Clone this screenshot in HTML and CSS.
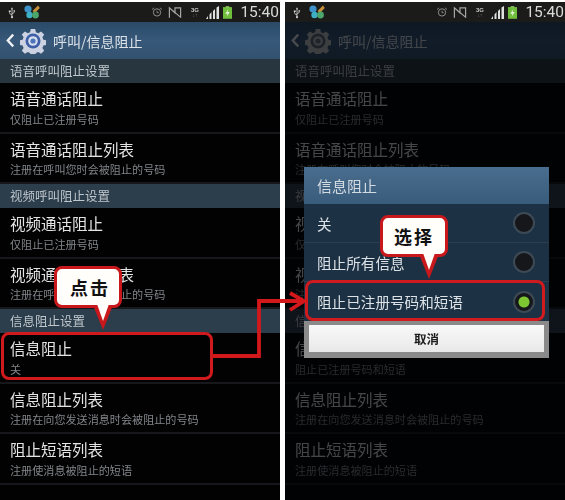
FILE: index.html
```html
<!DOCTYPE html>
<html lang="zh">
<head>
<meta charset="utf-8">
<title>呼叫/信息阻止</title>
<link rel="stylesheet" href="styles.css">
</head>
<body>
<main class="page">
  <section class="phone">
    <header class="status">
      <svg class="usb" viewBox="0 0 10 14"><path d="M5 .5 3.600 3H4.500V9.500L2.500 7.800V6.400H3.400V4.600H1V6.400H1.700V8.200L4.500 10.600V11.500A1.300 1.300 0 1 0 5.500 11.500V9L8 7.200V5.800H8.800V4.200H6.800V5.800H7.300V6.800L5.500 8V3H6.400Z" fill="#d8dad8"/></svg>
      <svg class="notif" viewBox="0 0 16 14"><circle cx="4" cy="4" r="3.600" fill="#3f93c9"/><circle cx="5.500" cy="10" r="3.200" fill="#3fb0c4"/><path d="M8.500 6 14 .5 15.800 3 11 8Z" fill="#c9903a"/><circle cx="11.500" cy="10" r="3.400" fill="#4aa66b"/></svg>
      <span class="spacer"></span>
      <svg class="alarm" viewBox="0 0 14 12"><circle cx="7" cy="6.500" r="4.400" fill="none" stroke="#8d8f8d" stroke-width="1.200"/><path d="M1 3 3.500 1M13 3 10.500 1M7 4.500V6.800H9" fill="none" stroke="#8d8f8d" stroke-width="1.100"/></svg>
      <svg class="mute" viewBox="0 0 15 13"><path d="M1.500 12V1.500L7.500 7V1.500H13.500V12M1 1 14 12" fill="none" stroke="#a4a6a4" stroke-width="1.300"/></svg>
      <span class="net"><b>3G</b><i>↓↑</i></span>
      <svg class="signal" viewBox="0 0 15 13"><path d="M0 13 2 10V13ZM3.500 13V8.500L5.500 6V13ZM7 13V5L9 3V13ZM10.500 13V1.500L13 0V13Z" fill="#dfe1df"/></svg>
      <svg class="battery" viewBox="0 0 10 14"><rect y="1" width="10" height="13" fill="#6fbe3c"/><rect x="3" width="4" height="1.500" fill="#9bd06c"/><path d="M6 3 2.500 8.500H5L4 12 7.500 6.500H5Z" fill="#e6f2d8"/></svg>
      <span class="clock">15:40</span>
    </header>
    <div class="screen">
      <div class="actionbar">
        <svg class="back" viewBox="0 0 10 16"><path d="M8 1.500 2 8l6 6.500" fill="none" stroke="#eef1f3" stroke-width="2.600"/></svg>
        <svg class="gear" viewBox="0 0 26 26">
          <path class="gear-body" d="M10.800 1h4.400l.7 3.200 2.400 1 2.800-1.800 3.100 3.100-1.800 2.800 1 2.400 3.200.7v4.400l-3.200.7-1 2.400 1.800 2.800-3.100 3.100-2.800-1.800-2.400 1-.7 3.200h-4.400l-.7-3.200-2.400-1-2.800 1.800-3.100-3.100 1.800-2.800-1-2.400-3.200-.7v-4.400l3.200-.7 1-2.400-1.800-2.800 3.100-3.100 2.800 1.800 2.400-1Z"/>
          <circle cx="13" cy="13" r="7.500" class="gear-ring"/><circle cx="13" cy="13" r="4.800" class="gear-light"/><circle cx="13" cy="13" r="2.600" class="gear-hole"/>
        </svg>
        <h1 class="bar-title">呼叫/信息阻止</h1>
      </div>
      <h2 class="group first">语音呼叫阻止设置</h2>
      <div class="row"><div class="title">语音通话阻止</div><div class="sub">仅阻止已注册号码</div></div>
      <div class="row"><div class="title">语音通话阻止列表</div><div class="sub">注册在呼叫您时会被阻止的号码</div></div>
      <h2 class="group">视频呼叫阻止设置</h2>
      <div class="row"><div class="title">视频通话阻止</div><div class="sub">仅阻止已注册号码</div></div>
      <div class="row"><div class="title">视频通话阻止列表</div><div class="sub">注册在呼叫您时会被阻止的号码</div></div>
      <h2 class="group">信息阻止设置</h2>
      <div class="row"><div class="title">信息阻止</div><div class="sub">关</div></div>
      <div class="row"><div class="title">信息阻止列表</div><div class="sub">注册在向您发送消息时会被阻止的号码</div></div>
      <div class="row"><div class="title">阻止短语列表</div><div class="sub">注册使消息被阻止的短语</div></div>
    </div>
    <div class="highlight"></div>
    <div class="bubble bubble-left"><span>点击</span></div>
  </section>

  <section class="phone">
    <header class="status">
      <svg class="usb" viewBox="0 0 10 14"><path d="M5 .5 3.600 3H4.500V9.500L2.500 7.800V6.400H3.400V4.600H1V6.400H1.700V8.200L4.500 10.600V11.500A1.300 1.300 0 1 0 5.500 11.500V9L8 7.200V5.800H8.800V4.200H6.800V5.800H7.300V6.800L5.500 8V3H6.400Z" fill="#d8dad8"/></svg>
      <svg class="notif" viewBox="0 0 16 14"><circle cx="4" cy="4" r="3.600" fill="#3f93c9"/><circle cx="5.500" cy="10" r="3.200" fill="#3fb0c4"/><path d="M8.500 6 14 .5 15.800 3 11 8Z" fill="#c9903a"/><circle cx="11.500" cy="10" r="3.400" fill="#4aa66b"/></svg>
      <span class="spacer"></span>
      <svg class="alarm" viewBox="0 0 14 12"><circle cx="7" cy="6.500" r="4.400" fill="none" stroke="#8d8f8d" stroke-width="1.200"/><path d="M1 3 3.500 1M13 3 10.500 1M7 4.500V6.800H9" fill="none" stroke="#8d8f8d" stroke-width="1.100"/></svg>
      <svg class="mute" viewBox="0 0 15 13"><path d="M1.500 12V1.500L7.500 7V1.500H13.500V12M1 1 14 12" fill="none" stroke="#a4a6a4" stroke-width="1.300"/></svg>
      <span class="net"><b>3G</b><i>↓↑</i></span>
      <svg class="signal" viewBox="0 0 15 13"><path d="M0 13 2 10V13ZM3.500 13V8.500L5.500 6V13ZM7 13V5L9 3V13ZM10.500 13V1.500L13 0V13Z" fill="#dfe1df"/></svg>
      <svg class="battery" viewBox="0 0 10 14"><rect y="1" width="10" height="13" fill="#6fbe3c"/><rect x="3" width="4" height="1.500" fill="#9bd06c"/><path d="M6 3 2.500 8.500H5L4 12 7.500 6.500H5Z" fill="#e6f2d8"/></svg>
      <span class="clock">15:40</span>
    </header>
    <div class="screen">
      <div class="actionbar">
        <svg class="back" viewBox="0 0 10 16"><path d="M8 1.500 2 8l6 6.500" fill="none" stroke="#eef1f3" stroke-width="2.600"/></svg>
        <svg class="gear gear-off" viewBox="0 0 26 26">
          <path class="gear-body" d="M10.800 1h4.400l.7 3.200 2.400 1 2.800-1.800 3.100 3.100-1.800 2.800 1 2.400 3.200.7v4.400l-3.200.7-1 2.400 1.800 2.800-3.100 3.100-2.800-1.800-2.400 1-.7 3.200h-4.400l-.7-3.200-2.400-1-2.800 1.800-3.100-3.100 1.800-2.800-1-2.400-3.200-.7v-4.400l3.200-.7 1-2.400-1.800-2.800 3.100-3.100 2.800 1.800 2.400-1Z"/>
          <circle cx="13" cy="13" r="7.500" class="gear-ring"/><circle cx="13" cy="13" r="4.800" class="gear-light"/><circle cx="13" cy="13" r="2.600" class="gear-hole"/>
        </svg>
        <h1 class="bar-title">呼叫/信息阻止</h1>
      </div>
      <h2 class="group first">语音呼叫阻止设置</h2>
      <div class="row"><div class="title">语音通话阻止</div><div class="sub">仅阻止已注册号码</div></div>
      <div class="row"><div class="title">语音通话阻止列表</div><div class="sub">注册在呼叫您时会被阻止的号码</div></div>
      <h2 class="group">视频呼叫阻止设置</h2>
      <div class="row"><div class="title">视频通话阻止</div><div class="sub">仅阻止已注册号码</div></div>
      <div class="row"><div class="title">视频通话阻止列表</div><div class="sub">注册在呼叫您时会被阻止的号码</div></div>
      <h2 class="group">信息阻止设置</h2>
      <div class="row"><div class="title">信息阻止</div><div class="sub">阻止已注册号码和短语</div></div>
      <div class="row"><div class="title">信息阻止列表</div><div class="sub">注册在向您发送消息时会被阻止的号码</div></div>
      <div class="row"><div class="title">阻止短语列表</div><div class="sub">注册使消息被阻止的短语</div></div>
      <div class="scrim"></div>
    </div>
    <div class="dialog">
      <div class="dialog-head">信息阻止</div>
      <div class="option"><span>关</span><i class="radio"></i></div>
      <div class="option"><span>阻止所有信息</span><i class="radio"></i></div>
      <div class="option selected"><span>阻止已注册号码和短语</span><i class="radio on"></i></div>
      <div class="dialog-foot"><button class="cancel" type="button">取消</button></div>
    </div>
    <div class="bubble bubble-right"><span>选择</span></div>
  </section>

  <svg class="connector" viewBox="0 0 565 500">
    <path d="M212 356H259V301H303" fill="none" stroke="#d3181c" stroke-width="3.800"/>
    <path d="M290 293 304 301 290 310" fill="none" stroke="#d3181c" stroke-width="3.800"/>
  </svg>
</main>
</body>
</html>
```

FILE: styles.css
```css
* { box-sizing: border-box; }
html, body { margin: 0; padding: 0; background: #fff; }
.page {
  position: relative;
  width: 565px;
  height: 500px;
  overflow: hidden;
  padding-top: 2px;
  display: flex;
  gap: 5px;
  font-family: "Noto Sans CJK SC", "Liberation Sans", sans-serif;
}
.phone { position: relative; width: 280px; height: 498px; overflow: hidden; background: #020203; }
.screen { position: relative; height: 478px; filter: blur(0.35px); }
.status {
  height: 20px;
  display: flex;
  align-items: center;
  padding: 0 1px 0 8px;
  background: #1b1b1a;
  filter: blur(0.3px);
}
.status svg { display: block; flex: none; }
.usb { width: 8px; height: 13px; }
.notif { width: 16px; height: 14px; margin-left: 8px; }
.spacer { flex: 1; }
.alarm { width: 12px; height: 10px; }
.mute { width: 14px; height: 13px; margin-left: 5px; }
.net { width: 9px; margin-left: 8px; display: flex; flex-direction: column; align-items: center; color: #c8cac8; line-height: 6px; }
.net b { font: 700 6px/6px "Liberation Sans", sans-serif; }
.net i { font: normal 5px/5px "Liberation Sans", sans-serif; color: #777; }
.signal { width: 15px; height: 13px; margin-left: 7px; }
.battery { width: 9px; height: 13px; margin-left: 2px; }
.clock { margin-left: 8px; color: #d9dbd9; font: 15.500px/20px "Roboto", "Liberation Sans", sans-serif; }
.actionbar {
  height: 37px;
  display: flex;
  align-items: center;
  padding-left: 6px;
  background: linear-gradient(#2a4a67, #38587a 50%, #33526f);
}
.back { width: 9px; height: 15px; }
.gear { width: 26px; height: 26px; margin-left: 5px; }
.gear-body { fill: #ccd2e2; }
.gear-ring { fill: #3e5ea8; }
.gear-light { fill: #d5deee; }
.gear-hole { fill: #4c73b8; }
.gear-off .gear-body { fill: #c8c8c8; }
.gear-off .gear-ring { fill: #606a78; }
.gear-off .gear-light { fill: #c2c6cc; }
.gear-off .gear-hole { fill: #6a7686; }
.bar-title { margin: 0 0 0 7px; font-size: 14px; font-weight: 400; color: #dbe2e8; line-height: 20px; }
.group {
  margin: 0;
  height: 24px;
  padding-left: 10px;
  font-size: 12.500px;
  line-height: 24px;
  font-weight: 400;
  color: #bfc7cd;
  background: #2c3d4b;
}
.group.first { background: #27363f; }
.row {
  height: 50.500px;
  padding: 4px 0 0 10px;
  border-bottom: 2px solid #16181b;
  white-space: nowrap;
}
.title { font-size: 15.500px; line-height: 23px; color: #e4e4e4; }
.sub { margin-top: .5px; font-size: 11.100px; line-height: 16px; color: #82868a; }
.highlight {
  position: absolute;
  left: 1px;
  top: 330px;
  width: 212px;
  height: 48px;
  border: 3.800px solid #cf1a1e;
  border-radius: 8px;
}
.bubble {
  position: absolute;
  width: 68px;
  height: 42px;
  display: flex;
  align-items: center;
  justify-content: center;
  background: #fffefa;
  border: 3px solid #c9181c;
  border-radius: 8px;
  font-family: "Liberation Serif", "Noto Sans CJK SC", serif;
  font-weight: 700;
  font-size: 18px;
  letter-spacing: 2px;
  color: #111;
}
.bubble::before {
  content: "";
  position: absolute;
  left: 36px;
  top: 36px;
  border-style: solid;
  border-width: 25px 10px 0 10px;
  border-color: #c9181c transparent transparent;
}
.bubble::after {
  content: "";
  position: absolute;
  left: 40px;
  top: 35px;
  border-style: solid;
  border-width: 17px 6px 0 6px;
  border-color: #fffefa transparent transparent;
}
.bubble span { position: relative; z-index: 1; }
.bubble-left { left: 54px; top: 264px; padding-left: 4px; }
.bubble-right { left: 95px; top: 213px; }
.scrim { position: absolute; inset: 0; background: rgba(2, 3, 5, 0.7); }
.dialog {
  position: absolute;
  left: 19px;
  top: 165px;
  width: 245px;
  height: 191px;
  background: #1c3144;
  filter: blur(0.25px);
}
.dialog-head {
  height: 37px;
  padding-left: 13px;
  font-size: 15px;
  line-height: 37px;
  color: #d3dbe2;
  background: linear-gradient(#496d8e, #3a5c7c);
}
.option {
  position: relative;
  height: 39px;
  display: flex;
  align-items: center;
  justify-content: space-between;
  padding: 0 14px 0 13px;
  font-size: 14.600px;
  color: #dde2e6;
  border-bottom: 1px solid #2b3f51;
}
.radio {
  width: 22px;
  height: 22px;
  flex: none;
  border-radius: 50%;
  background: #15171b;
  border: 2px solid #3d4a55;
}
.radio.on { background: radial-gradient(circle, #7dc832 0 5px, #15171b 6px); }
.selected { border-bottom: 0; }
.selected::after {
  content: "";
  position: absolute;
  inset: -2px 4px 0 1px;
  border: 3.800px solid #cf1a1e;
  border-radius: 8px;
}
.dialog-foot { height: 37px; padding: 4px 5px 6px; background: #8a8a8a; }
.cancel {
  display: block;
  width: 100%;
  height: 100%;
  padding: 0;
  border: 0;
  background: linear-gradient(#f8f8f8, #e9e9e9);
  font: 700 12.500px "Noto Sans CJK SC", sans-serif;
  color: #1c1c1c;
}
.connector { position: absolute; left: 0; top: 0; width: 565px; height: 500px; pointer-events: none; }
```
